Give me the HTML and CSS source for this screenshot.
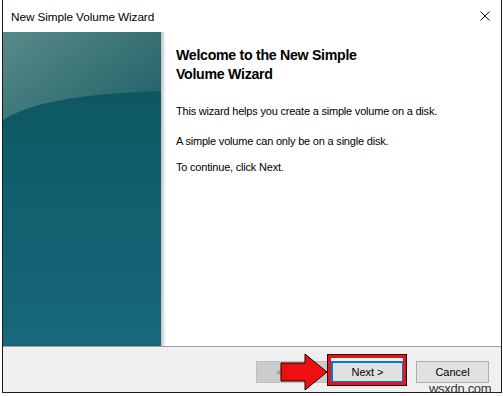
FILE: index.html
```html
<!DOCTYPE html>
<html>
<head>
<meta charset="utf-8">
<link rel="stylesheet" href="styles.css">
</head>
<body>
<div class="window">
  <div class="titlebar">
    <span class="title">New Simple Volume Wizard</span>
    <svg class="close" width="10" height="10" viewBox="0 0 10 10"><path d="M0.5,0.5 L9.5,9.5 M9.5,0.5 L0.5,9.5" stroke="#111" stroke-width="1" fill="none"/></svg>
  </div>
  <div class="main">
    <div class="side">
      <svg width="158" height="314" viewBox="0 0 158 314">
        <defs>
          <linearGradient id="gtop" x1="0" y1="0" x2="1" y2="0.7">
            <stop offset="0" stop-color="#578b8a"/>
            <stop offset="1" stop-color="#27646a"/>
          </linearGradient>
          <linearGradient id="gbot" x1="0" y1="0" x2="0" y2="1">
            <stop offset="0.2" stop-color="#0d5860"/>
            <stop offset="0.55" stop-color="#116070"/>
            <stop offset="1" stop-color="#17687a"/>
          </linearGradient>
        </defs>
        <rect width="158" height="314" fill="url(#gbot)"/>
        <path d="M0,0 H158 V59 C70,62 25,72 0,88 Z" fill="url(#gtop)"/>
      </svg>
    </div>
    <div class="shade"></div>
    <div class="content">
      <h1 class="heading">Welcome to the New Simple<br>Volume Wizard</h1>
      <p class="text p1">This wizard helps you create a simple volume on a disk.</p>
      <p class="text p2">A simple volume can only be on a single disk.</p>
      <p class="text">To continue, click Next.</p>
    </div>
  </div>
  <div class="footer">
    <button class="btn back">&lt; Back</button>
    <span class="next-wrap">
      <button class="btn next">Next &gt;</button>
      <span class="highlight"></span>
    </span>
    <button class="btn cancel">Cancel</button>
  </div>
  <svg class="arrow" width="52" height="44" viewBox="0 0 52 44">
    <path d="M2,12 H26 V3 L48,21 L26,39 V30 H2 Z" fill="#ee1010" stroke="#1a0000" stroke-width="1" stroke-linejoin="miter"/>
  </svg>
</div>
<div class="watermark">wsxdn.com</div>
</body>
</html>
```
FILE: styles.css
```css
html, body {
  margin: 0;
  padding: 0;
}
body {
  width: 503px;
  height: 396px;
  position: relative;
  overflow: hidden;
  background: #ffffff;
  font-family: "Liberation Sans", Arial, sans-serif;
  color: #000;
}
.window {
  margin-left: 2px;
  width: 500px;
  height: 393px;
  box-sizing: border-box;
  border: 1px solid #1c1c1c;
  border-top: none;
  display: flex;
  flex-direction: column;
  position: relative;
  background: #fff;
}
.titlebar {
  height: 32px;
  flex: none;
  display: flex;
  align-items: center;
  justify-content: space-between;
  padding: 0 11px 0 8px;
}
.title {
  font-size: 11.8px;
  line-height: 14px;
  margin-top: 1px;
  letter-spacing: -0.1px;
}
.close {
  display: block;
}
.main {
  flex: none;
  height: 314px;
  display: flex;
}
.side {
  width: 158px;
  flex: none;
}
.side svg {
  display: block;
}
.shade {
  width: 5px;
  flex: none;
  background: linear-gradient(to right, #bcbcbc, #e8e8e8 60%, #ffffff);
}
.content {
  flex: 1;
  padding: 14px 10px 0 10px;
}
.heading {
  margin: 0 0 21px;
  font-size: 14.2px;
  line-height: 19px;
  font-weight: bold;
  letter-spacing: -0.3px;
}
.text {
  margin: 0;
  font-size: 11px;
  line-height: 13px;
  letter-spacing: -0.2px;
}
.p1 {
  margin-bottom: 17px;
}
.p2 {
  margin-bottom: 13px;
}
.footer {
  flex: none;
  height: 46px;
  box-sizing: border-box;
  border-top: 1px solid #a0a0a0;
  background: #f0f0f0;
  display: flex;
  justify-content: flex-end;
  align-items: flex-start;
  padding: 14px 12px 0 0;
}
.btn {
  height: 22px;
  box-sizing: border-box;
  border: 1px solid #adadad;
  background: #e1e1e1;
  font-family: "Liberation Sans", Arial, sans-serif;
  font-size: 11px;
  color: #000;
  padding: 0;
  margin: 0;
}
.back {
  width: 75px;
  background: #cccccc;
  border-color: #bfbfbf;
  color: #838383;
}
.next-wrap {
  position: relative;
  display: flex;
}
.next {
  width: 73px;
  border: 2px solid #0078d7;
}
.cancel {
  width: 73px;
  margin-left: 12px;
}
.highlight {
  position: absolute;
  left: -3px;
  right: -2px;
  top: -6px;
  bottom: -2px;
  border: 3px solid #e8141c;
  outline: 1px solid #2a0000;
}
.arrow {
  position: absolute;
  left: 276px;
  top: 351px;
  display: block;
}
.watermark {
  position: absolute;
  left: 429px;
  top: 382px;
  font-family: "Liberation Sans", Arial, sans-serif;
  font-size: 13px;
  line-height: 13px;
  letter-spacing: -0.3px;
  color: #333333;
}
```
